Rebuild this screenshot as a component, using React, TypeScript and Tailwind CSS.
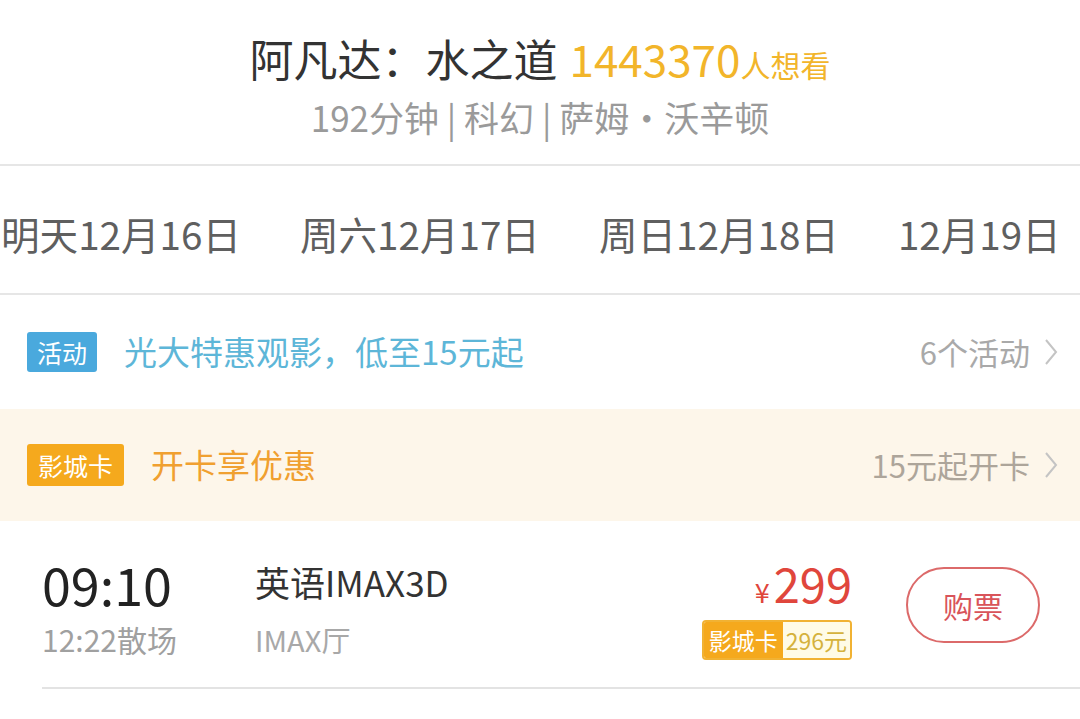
const font = { fontFamily: '"Noto Sans CJK SC", "Noto Sans", sans-serif' };

function Chevron() {
  return (
    <svg width="14" height="28" viewBox="0 0 14 28" className="ml-[14px]">
      <polyline points="2,2 12,14 2,26" fill="none" stroke="#c4c4c4" strokeWidth="2" />
    </svg>
  );
}

const dates = ["明天12月16日", "周六12月17日", "周日12月18日", "12月19日"];

export default function App() {
  return (
    <div className="w-[1080px] h-[719px] bg-white overflow-hidden" style={font}>
      <div className="h-[166px] border-b-2 border-[#e6e6e6] flex flex-col items-center pt-[30px]">
        <div className="flex items-baseline leading-[56px]">
          <span className="text-[44px] text-[#333]">阿凡达：水之道</span>
          <span className="text-[44px] text-[#f2b52a] ml-3">1443370</span>
          <span className="text-[30px] text-[#f2b52a]">人想看</span>
        </div>
        <div className="text-[35px] leading-[46px] text-[#9a9a9a] mt-[2px]">
          192分钟 | 科幻 | 萨姆・沃辛顿
        </div>
      </div>

      <div className="h-[129px] border-b-2 border-[#e6e6e6] flex items-center gap-[59px] pl-[1px] pt-[8px] whitespace-nowrap">
        {dates.map((d) => (
          <span key={d} className="text-[38.6px] text-[#5f5f5f] leading-none">
            {d}
          </span>
        ))}
      </div>

      <div className="h-[114px] flex items-center pl-[27px] pr-[22px]">
        <span className="bg-[#4aa9dd] text-white text-[25px] leading-[40px] px-[10px] rounded-[3px]">活动</span>
        <span className="text-[33px] text-[#5db6d8] ml-[27px]">光大特惠观影，低至15元起</span>
        <span className="ml-auto text-[31px] text-[#a9a9a9]">6个活动</span>
        <Chevron />
      </div>

      <div className="h-[112px] bg-[#fdf6ea] flex items-center pl-[27px] pr-[22px]">
        <span className="bg-[#f5a91d] text-white text-[25px] leading-[42px] px-[11px] rounded-[3px]">影城卡</span>
        <span className="text-[33px] text-[#f0a030] ml-[27px]">开卡享优惠</span>
        <span className="ml-auto text-[31px] text-[#ada59a]">15元起开卡</span>
        <Chevron />
      </div>

      <div className="ml-[42px] h-[168px] border-b-2 border-[#e3e3e3] flex items-start pt-[36px] pr-[40px]">
        <div className="flex flex-col w-[213px]">
          <span className="text-[52px] leading-[54px] text-[#222]">09:10</span>
          <span className="text-[30px] leading-[36px] text-[#a0a0a0] mt-[10px]">12:22散场</span>
        </div>
        <div className="flex flex-col">
          <span className="text-[35px] leading-[50px] text-[#333]">英语IMAX3D</span>
          <span className="text-[29px] leading-[36px] text-[#a8a8a8] mt-[14px]">IMAX厅</span>
        </div>
        <div className="ml-auto flex flex-col items-end -mt-[2px]">
          <div className="flex items-baseline text-[#e0463c] leading-[56px]">
            <span className="text-[27px] mr-[4px]">¥</span>
            <span className="text-[47px]">299</span>
          </div>
          <div className="flex border-2 border-[#f1b233] rounded-[4px] overflow-hidden">
            <span className="bg-[#f5a91d] text-white text-[23px] leading-[36px] px-[5px]">影城卡</span>
            <span className="bg-[#fffbe6] text-[#d5b23c] text-[23px] leading-[36px] px-[3px]">296元</span>
          </div>
        </div>
        <div className="ml-[54px] mt-[10px] w-[134px] h-[76px] rounded-full border-2 border-[#dc6a6a] flex items-center justify-center text-[30px] text-[#d9545a]">
          购票
        </div>
      </div>
    </div>
  );
}
